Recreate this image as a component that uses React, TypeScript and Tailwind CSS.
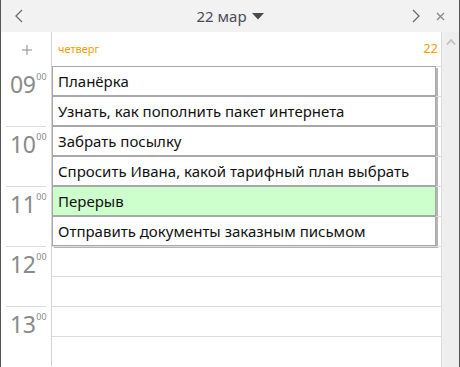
import React from 'react';

type Ev = { title: string; green?: boolean };

const events: Ev[] = [
  { title: 'Планёрка' },
  { title: 'Узнать, как пополнить пакет интернета' },
  { title: 'Забрать посылку' },
  { title: 'Спросить Ивана, какой тарифный план выбрать' },
  { title: 'Перерыв', green: true },
  { title: 'Отправить документы заказным письмом' },
];

const hours = ['09', '10', '11', '12', '13'];

function HourRow({ hour, index }: { hour: string; index: number }) {
  const slots = [index * 2, index * 2 + 1];
  return (
    <div className="flex h-[60px]">
      {/* gutter */}
      <div className="relative w-[50px] shrink-0">
        {index > 0 && <div className="absolute left-[5px] right-[5px] top-0 h-px bg-[#dcdcdc]" />}
        <div className="flex items-start pl-[9px] pt-[4px] text-[#8a8a8a]">
          <span className="text-[23px] leading-[28px] tracking-[-0.5px]">{hour}</span>
          <span className="ml-[1px] text-[9px] leading-[10px] mt-[2px]">00</span>
        </div>
      </div>
      <div className="w-px shrink-0 bg-[#d4d4d4]" />
      <div className="flex-1 flex flex-col">
        {slots.map((s) => {
          const ev = events[s];
          return (
            <div key={s} className="h-[30px] border-t border-[#dcdcdc] relative">
              {ev && (
                <div
                  className={`absolute left-0 top-[-1px] h-[30px] w-[384px] border border-[#a8a8a8] shadow-[2px_2px_0_#b4b4b4] flex items-center pl-[5px] text-[15px] text-[#111] ${
                    ev.green ? 'bg-[#ccffcc]' : 'bg-white'
                  }`}
                >
                  {ev.title}
                </div>
              )}
            </div>
          );
        })}
      </div>
    </div>
  );
}

export default function App() {
  return (
    <div
      className="w-[460px] h-[367px] overflow-hidden bg-white border-l border-r border-[#555] flex flex-col"
      style={{ fontFamily: '"Noto Sans", "Open Sans", sans-serif' }}
    >
      {/* Header */}
      <div className="h-[32px] shrink-0 bg-[#f2f2f2] flex items-center">
        <div className="w-[60px] flex items-center">
          <svg width="10" height="14" viewBox="0 0 10 14" className="ml-[13px]">
            <path d="M8 1 L2 7 L8 13" fill="none" stroke="#6b6b6b" strokeWidth="1.3" />
          </svg>
        </div>
        <div className="flex-1 flex items-center justify-center gap-[5px] text-[15px] text-[#4a4a5a]">
          <span>22 мар</span>
          <svg width="12" height="7" viewBox="0 0 12 7">
            <path d="M0 0 H12 L6 6.5 Z" fill="#4a4a4a" />
          </svg>
        </div>
        <div className="w-[60px] flex items-center justify-end">
          <svg width="10" height="14" viewBox="0 0 10 14" className="mr-[15px]">
            <path d="M2 1 L8 7 L2 13" fill="none" stroke="#6b6b6b" strokeWidth="1.3" />
          </svg>
          <svg width="9" height="9" viewBox="0 0 9 9" className="mr-[14px]">
            <path d="M1 1 L8 8 M8 1 L1 8" stroke="#8a8a8a" strokeWidth="1.4" />
          </svg>
        </div>
      </div>

      <div className="flex-1 flex min-h-0">
        <div className="flex-1 flex flex-col min-w-0">
          {/* Day header */}
          <div className="h-[34px] shrink-0 flex">
            <div className="w-[50px] shrink-0 flex items-center justify-center">
              <svg width="10" height="10" viewBox="0 0 10 10" className="ml-[2px] mt-[1px]">
                <path d="M5 0 V10 M0 5 H10" stroke="#8a8a8a" strokeWidth="1" />
              </svg>
            </div>
            <div className="w-px shrink-0 bg-[#d4d4d4]" />
            <div className="flex-1 flex items-center justify-between pl-[6px] pr-[3px] text-[#ff9a00]">
              <span className="text-[11px]">четверг</span>
              <span className="text-[13px]">22</span>
            </div>
          </div>
          {hours.map((h, i) => (
            <HourRow key={h} hour={h} index={i} />
          ))}
        </div>
        {/* Scrollbar */}
        <div className="w-[18px] shrink-0 border-l border-[#dcdcdc] bg-[#eeeeee] flex justify-center">
          <svg width="10" height="6" viewBox="0 0 10 6" className="mt-[7px]">
            <path d="M1 5.5 L5 1 L9 5.5" fill="none" stroke="#bdbdbd" strokeWidth="1.6" />
          </svg>
        </div>
      </div>
    </div>
  );
}
